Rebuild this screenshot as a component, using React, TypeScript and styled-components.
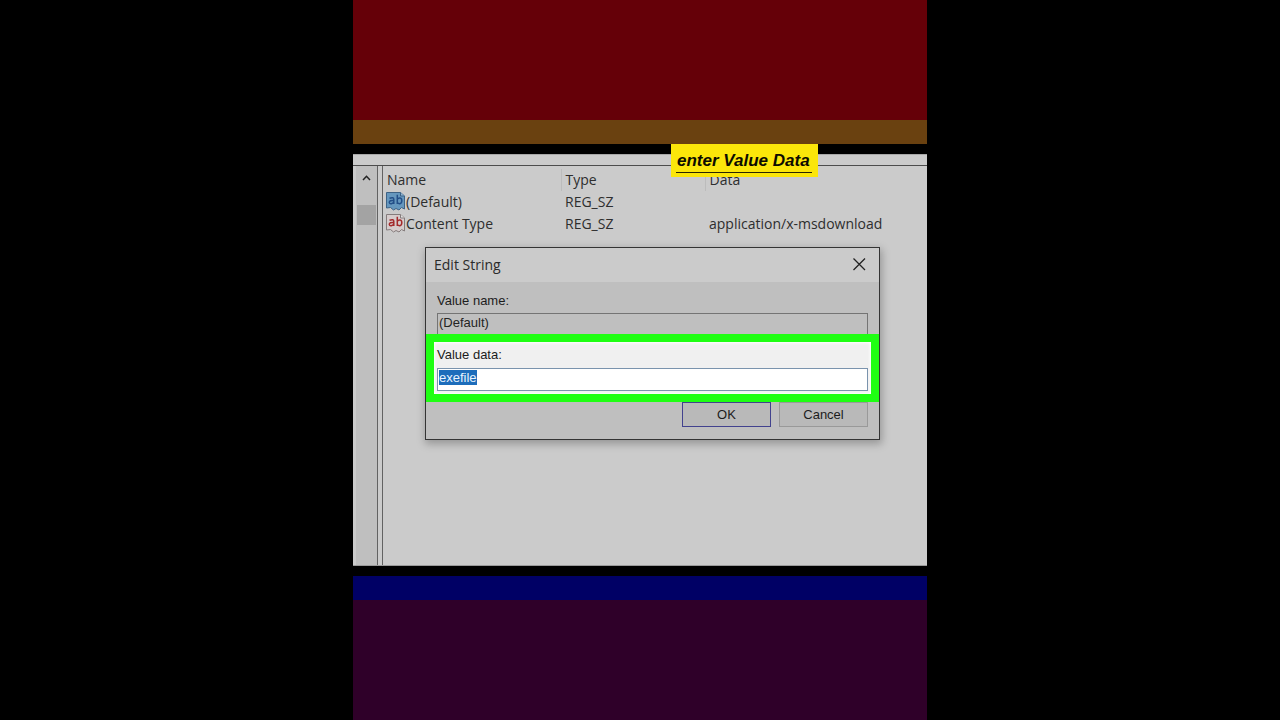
import React from 'react';
import styled, { createGlobalStyle } from 'styled-components';

const ui = '"Open Sans", "Noto Sans", sans-serif';
const classic = '"Liberation Sans", Arial, sans-serif';

const GlobalStyle = createGlobalStyle`
  *, *::before, *::after { box-sizing: border-box; }
  body { margin: 0; background: #000; }
`;

const Stage = styled.main`
  position: relative;
  display: flex;
  flex-direction: column;
  width: 100%;
  max-width: 574px;
  min-height: 100vh;
  margin: 0 auto;
`;

const Band = styled.div<{ $color: string; $grow?: boolean }>`
  flex: ${(p) => (p.$grow ? '1 1 24px' : '0 0 24px')};
  background: ${(p) => p.$color};
`;

const Screen = styled.section`
  position: relative;
  padding: 10px 0;
  background: #000;
`;

const Caption = styled.p`
  position: absolute;
  z-index: 2;
  top: 0;
  left: 318px;
  margin: 0;
  padding: 4px 6px 4px 5px;
  background: #fbe60a;
  font: italic 700 17px/26px ${classic};
  color: #0c0c00;
  white-space: nowrap;

  span {
    display: block;
    height: 25px;
    padding: 0 2px 0 1px;
    border-bottom: 1px solid #2a2600;
  }
`;

const Registry = styled.div`
  display: flex;
  flex-direction: column;
  min-height: 412px;
  background: #cbcbcb;
  border-bottom: 1px solid #9a9a9a;
`;

const Strip = styled.div`
  height: 12px;
  border-top: 1px solid #a8a8a8;
  border-bottom: 1px solid #4c4c4c;
`;

const Panes = styled.div`
  display: flex;
  flex: 1;
`;

const ScrollTrack = styled.div`
  display: flex;
  flex-direction: column;
  width: 21px;
  margin-left: 3px;
  background: #bfbfbf;
`;

const ScrollUp = styled.button`
  display: flex;
  align-items: center;
  justify-content: center;
  height: 24px;
  padding: 0;
  border: 0;
  background: transparent;
`;

const Thumb = styled.div`
  height: 20px;
  margin: 15px 1px 0;
  background: #a3a3a3;
`;

const Divider = styled.div`
  width: 6px;
  border-left: 1px solid #626262;
  border-right: 1px solid #626262;
`;

const ListPane = styled.div`
  position: relative;
  flex: 1;
  min-width: 0;
  padding-top: 3px;
`;

const Values = styled.table`
  width: 100%;
  table-layout: fixed;
  border-collapse: collapse;
  font: 14px/22px ${ui};
  color: #2e2e2e;

  th, td {
    height: 22px;
    padding: 0 0 0 4px;
    font-weight: 400;
    text-align: left;
    white-space: nowrap;
  }
  th + th { border-left: 1px solid #bcbcbc; }
`;

const Entry = styled.span`
  display: flex;
  align-items: center;
  height: 22px;
  margin-left: -1px;

  svg { margin-bottom: 2px; }
`;

const Dialog = styled.div`
  position: absolute;
  top: 81px;
  left: 42px;
  width: 455px;
  border: 1px solid #343434;
  background: #bfbfbf;
  box-shadow: 1px 3px 8px 1px rgba(0, 0, 0, 0.26);
  color: #1c1c1c;
  font: 13px/16px ${classic};
`;

const TitleBar = styled.header`
  display: flex;
  align-items: center;
  justify-content: space-between;
  height: 34px;
  padding: 0 12px 0 8px;
  background: #cbcbcb;
`;

const Title = styled.h2`
  margin: 0;
  font: 14px/20px ${ui};
  color: #2a2a2a;
`;

const CloseButton = styled.button`
  display: flex;
  padding: 0 1px 2px 0;
  border: 0;
  background: transparent;
`;

const Field = styled.div`
  display: flex;
  flex-direction: column;
  gap: 4px;
  padding: 11px 11px 0;

  input {
    width: 100%;
    height: 23px;
    padding: 0 1px;
    border: 1px solid #747474;
    border-radius: 0;
    outline: 0;
    background: #bfbfbf;
    color: #242424;
    font: 13px/16px ${classic};
  }
`;

const NameField = styled(Field)`
  input {
    height: 21px;
    padding-bottom: 3px;
    border-bottom: 0;
  }
`;

const DataField = styled(Field)`
  gap: 5px;
  padding: 5px 3px 3px;
  border: 8px solid #1fff13;
  background: #f0f0f0;
  box-shadow: inset 0 0 3px 1px #fff;

  input {
    padding-bottom: 5px;
    border-color: #7a93ad;
    background: #fff;
  }
  input::selection {
    background: #1d6dbb;
    color: #e8f4ff;
  }
`;

const Actions = styled.div`
  display: flex;
  justify-content: flex-end;
  gap: 8px;
  padding: 0 11px 12px;
`;

const ActionButton = styled.button<{ $primary?: boolean }>`
  width: 89px;
  height: 25px;
  padding: 0;
  border: 1px solid ${(p) => (p.$primary ? '#42428e' : '#999')};
  border-radius: 0;
  background: #b9b9b9;
  color: #1c1c1c;
  font: 13px/16px ${classic};
`;

function StringIcon({ selected }: { selected?: boolean }) {
  const line = selected ? '#3d6285' : '#857c7c';
  const ink = selected ? '#234f88' : '#a42a2c';
  return (
    <svg width="20" height="20" viewBox="0 0 20 20" aria-hidden="true">
      <path
        d="M0.500 1.500H14.500L18.500 5V18L15.500 16.500L13 19L10 17.500L7.500 19L4.500 16.500L0.500 17Z"
        fill={selected ? '#6597be' : '#d6cccc'}
        stroke={line}
      />
      <path d="M14.500 1.500V5H18.500" fill={selected ? '#8fb4d2' : '#e2e2e2'} stroke={line} />
      <g fill="none" stroke={ink} strokeWidth="1.500">
        <path d="M3.500 7.300Q7.800 5.700 7.800 8.500V13M7.800 9.500Q3.300 9.100 3.300 11.500Q3.500 13 5.300 12.800Q7.500 12.300 7.800 10.500" />
        <path d="M11.300 3.800V13M11.300 8.500Q12.200 6.700 14 6.900Q16 7.500 15.800 10Q15.600 12.700 13.500 12.800Q11.800 12.500 11.300 11.300" />
      </g>
    </svg>
  );
}

export default function App() {
  const dataInput = React.useRef<HTMLInputElement>(null);

  React.useEffect(() => {
    dataInput.current?.focus();
    dataInput.current?.select();
  }, []);

  return (
    <>
      <GlobalStyle />
      <Stage>
        <Band $color="#650008" $grow />
        <Band $color="#6a4110" />
        <Screen>
          <Caption><span>enter Value Data</span></Caption>
          <Registry>
            <Strip />
            <Panes>
              <ScrollTrack>
                <ScrollUp aria-label="Scroll up">
                  <svg width="9" height="6" viewBox="0 0 9 6">
                    <path d="M1 5L4.500 1.300L8 5" fill="none" stroke="#222" strokeWidth="1.500" />
                  </svg>
                </ScrollUp>
                <Thumb />
              </ScrollTrack>
              <Divider />
              <ListPane>
                <Values>
                  <colgroup>
                    <col style={{ width: 178 }} />
                    <col style={{ width: 144 }} />
                    <col />
                  </colgroup>
                  <thead>
                    <tr><th>Name</th><th>Type</th><th>Data</th></tr>
                  </thead>
                  <tbody>
                    <tr>
                      <td><Entry><StringIcon selected />(Default)</Entry></td>
                      <td>REG_SZ</td>
                      <td />
                    </tr>
                    <tr>
                      <td><Entry><StringIcon />Content Type</Entry></td>
                      <td>REG_SZ</td>
                      <td>application/x-msdownload</td>
                    </tr>
                  </tbody>
                </Values>
                <Dialog role="dialog" aria-labelledby="dialog-title">
                  <TitleBar>
                    <Title id="dialog-title">Edit String</Title>
                    <CloseButton aria-label="Close">
                      <svg width="14" height="14" viewBox="0 0 14 14">
                        <path d="M1.500 1.500L13 13M13 1.500L1.500 13" fill="none" stroke="#222" strokeWidth="1.300" />
                      </svg>
                    </CloseButton>
                  </TitleBar>
                  <NameField>
                    <label htmlFor="value-name">Value name:</label>
                    <input id="value-name" readOnly defaultValue="(Default)" />
                  </NameField>
                  <DataField>
                    <label htmlFor="value-data">Value data:</label>
                    <input id="value-data" ref={dataInput} defaultValue="exefile" />
                  </DataField>
                  <Actions>
                    <ActionButton $primary>OK</ActionButton>
                    <ActionButton>Cancel</ActionButton>
                  </Actions>
                </Dialog>
              </ListPane>
            </Panes>
          </Registry>
        </Screen>
        <Band $color="#000065" />
        <Band $color="#2f0029" $grow />
      </Stage>
    </>
  );
}
